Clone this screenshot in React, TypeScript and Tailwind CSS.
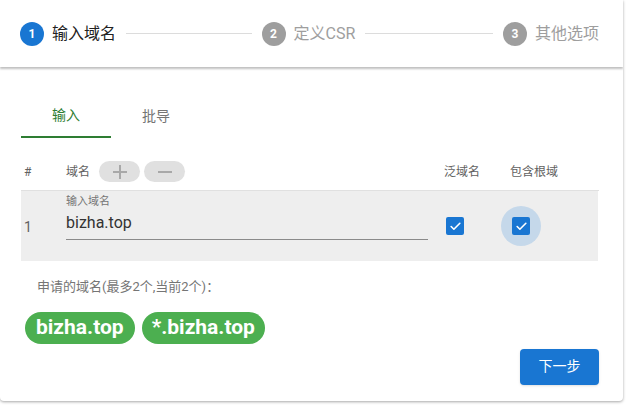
import { Check } from "lucide-react";

const steps = [
  { n: 1, label: "输入域名", active: true },
  { n: 2, label: "定义CSR", active: false },
  { n: 3, label: "其他选项", active: false },
];

function Checkbox({ halo }: { halo?: boolean }) {
  return (
    <div
      className={
        halo
          ? "flex h-[40px] w-[40px] items-center justify-center rounded-full bg-[#c5d8ea]"
          : "flex h-[40px] w-[40px] items-center justify-center"
      }>
      <div className="flex h-[18px] w-[18px] items-center justify-center rounded-[2px] bg-[#1976d2]">
        <Check size={13} strokeWidth={3} className="text-white" />
      </div>
    </div>
  );
}

export default function App() {
  return (
    <div className="h-[405px] w-[630px] bg-white font-['Roboto','Noto_Sans_CJK_SC',sans-serif]">
      <div className="w-[623px] overflow-hidden rounded-b-[4px] bg-white shadow-[0_1px_3px_rgba(0,0,0,0.35)]">
        {/* stepper */}
        <div className="relative z-10 flex h-[67px] items-center bg-white pl-[20px] pr-[24px] shadow-[0_2px_2px_rgba(0,0,0,0.25)]">
          {steps.map((s, i) => (
            <div key={s.n} className="flex flex-1 items-center last:flex-none">
              <div
                className={
                  s.active
                    ? "flex h-[24px] w-[24px] items-center justify-center rounded-full bg-[#1976d2] text-[12px] font-bold text-white"
                    : "flex h-[24px] w-[24px] items-center justify-center rounded-full bg-[#9e9e9e] text-[12px] font-bold text-white"
                }>
                {s.n}
              </div>
              <span
                className={
                  s.active
                    ? "ml-[8px] text-[16px] text-[#212121]"
                    : "ml-[8px] text-[16px] text-[#9e9e9e]"
                }>
                {s.label}
              </span>
              {i < steps.length - 1 && (
                <div className="mx-[10px] h-px flex-1 bg-[#dcdcdc]" />
              )}
            </div>
          ))}
        </div>

        {/* body */}
        <div className="pb-[16px] pl-[21px] pr-[24px] pt-[32px]">
          <div className="flex">
            <div className="flex h-[39px] w-[90px] items-center justify-center border-b-2 border-[#2e7d32] pb-[4px] text-[14px] text-[#2e7d32]">
              输入
            </div>
            <div className="flex h-[39px] w-[90px] items-center justify-center pb-[4px] text-[14px] text-[#757575]">
              批导
            </div>
          </div>

          <div className="mt-[15px] flex h-[38px] items-center border-b border-[#e0e0e0] text-[12px] text-[#616161]">
            <div className="w-[45px] pl-[3px]">#</div>
            <div className="flex w-[378px] items-center">
              <span>域名</span>
              <button className="relative ml-[9px] flex h-[21px] w-[41px] items-center justify-center rounded-full bg-[#e0e0e0]">
                <span className="h-[2px] w-[14px] bg-[#a8a8a8]" />
                <span className="absolute h-[14px] w-[2px] bg-[#a8a8a8]" />
              </button>
              <button className="ml-[4px] flex h-[21px] w-[41px] items-center justify-center rounded-full bg-[#e0e0e0]">
                <span className="h-[2px] w-[14px] bg-[#a8a8a8]" />
              </button>
            </div>
            <div className="w-[66px]">泛域名</div>
            <div>包含根域</div>
          </div>

          <div className="mr-[1px] flex h-[70px] items-center bg-[#eeeeee]">
            <div className="w-[45px] pl-[3px] pt-[2px] text-[14px] text-[#616161]">1</div>
            <div className="w-[362px] self-start pt-[4px]">
              <div className="text-[11px] leading-[14px] text-[#757575]">输入域名</div>
              <div className="h-[31px] border-b border-[#8a8a8a] text-[16px] leading-[28px] text-[#333]">
                bizha.top
              </div>
            </div>
            <div className="ml-[7px]">
              <Checkbox />
            </div>
            <div className="ml-[26px]">
              <Checkbox halo />
            </div>
          </div>

          <div className="mt-[16px] pl-[16px] text-[13px] text-[#757575]">
            申请的域名(最多2个,当前2个)：
          </div>

          <div className="mt-[15px] flex gap-[7px] pl-[4px]">
            <span className="flex h-[32px] items-center rounded-full bg-[#4caf50] px-[11px] text-[21px] font-bold text-white">
              bizha.top
            </span>
            <span className="flex h-[32px] items-center rounded-full bg-[#4caf50] px-[10px] text-[21px] font-bold text-white">
              *.bizha.top
            </span>
          </div>

          <div className="mt-[5px] flex justify-end">
            <button className="h-[36px] w-[79px] rounded-[4px] bg-[#1976d2] text-[14px] text-white shadow-sm">
              下一步
            </button>
          </div>
        </div>
      </div>
    </div>
  );
}
